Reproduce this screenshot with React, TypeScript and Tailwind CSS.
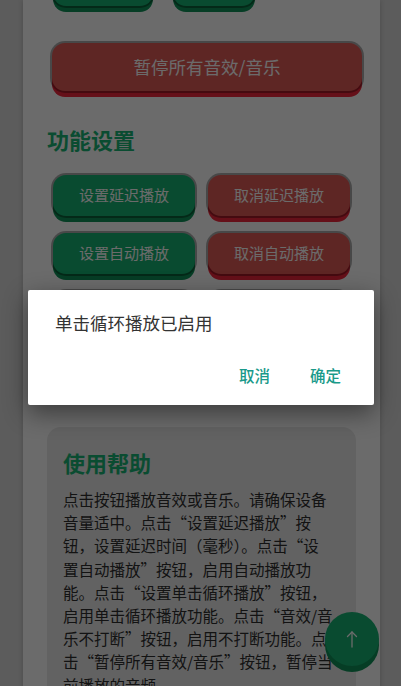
import React from "react";

const greenBtn =
  "flex items-center justify-center rounded-[13px] bg-[#17b273] text-white shadow-[0_0_0_2px_rgba(0,0,0,0.32),0_6px_0_#0f9258]";
const redBtn =
  "flex items-center justify-center rounded-[13px] bg-[#e05b57] text-white shadow-[0_0_0_2px_rgba(0,0,0,0.32),0_6px_0_#f0283c]";

const helpLines = [
  "点击按钮播放音效或音乐。请确保设备",
  "音量适中。点击“设置延迟播放”按",
  "钮，设置延迟时间（毫秒）。点击“设",
  "置自动播放”按钮，启用自动播放功",
  "能。点击“设置单击循环播放”按钮，",
  "启用单击循环播放功能。点击“音效/音",
  "乐不打断”按钮，启用不打断功能。点",
  "击“暂停所有音效/音乐”按钮，暂停当",
  "前播放的音频。",
];

export default function App() {
  return (
    <div className="relative h-[686px] w-[401px] overflow-hidden bg-[#dcdcdc] font-['Noto_Sans_CJK_SC','Noto_Sans',sans-serif]">
      <div className="ml-[23px] flex min-h-[760px] w-[357px] flex-col bg-white px-[24px] shadow-[0_0_6px_rgba(0,0,0,0.2)]">
        <div className="-mt-[36px] flex gap-[20px] pl-[6px]">
          <div className={`${greenBtn} h-[42px] w-[100px]`} />
          <div className={`${greenBtn} h-[42px] w-[82px]`} />
        </div>

        <div className={`${redBtn} ml-[5px] mt-[37px] h-[48px] w-[310px] text-[17.5px]`}>
          暂停所有音效/音乐
        </div>

        <h2 className="mt-[33px] text-[22px] font-bold leading-[30px] text-[#1ab576]">功能设置</h2>

        <div className="mt-[21px] grid grid-cols-2 gap-x-[13px] gap-y-[17px] px-[6px] text-[15px]">
          <div className={`${greenBtn} h-[41px]`}>设置延迟播放</div>
          <div className={`${redBtn} h-[41px]`}>取消延迟播放</div>
          <div className={`${greenBtn} h-[41px]`}>设置自动播放</div>
          <div className={`${redBtn} h-[41px]`}>取消自动播放</div>
          <div className={`${greenBtn} h-[41px]`} />
          <div className={`${redBtn} h-[41px]`} />
          <div className={`${greenBtn} h-[41px]`} />
          <div className={`${redBtn} h-[41px]`} />
        </div>

        <div className="mt-[37px] rounded-[14px] bg-[#e9e9e9] px-[16px] pb-[20px] pt-[20px]">
          <h2 className="text-[22px] font-bold leading-[30px] text-[#1ab576]">使用帮助</h2>
          <p className="mt-[11px] text-[15.5px] leading-[23.2px] text-[#2e2e2e]">
            {helpLines.map((l, i) => (
              <span key={i} className="block whitespace-nowrap">
                {l}
              </span>
            ))}
          </p>
        </div>
      </div>

      <div className="absolute bottom-[20px] right-[22px] flex h-[54px] w-[54px] items-center justify-center rounded-full bg-[#17b273] shadow-[0_6px_0_#0f9258]">
        <svg width="16" height="18" viewBox="0 0 16 18" fill="none" stroke="white" strokeWidth="1.3" strokeLinecap="round" strokeLinejoin="round">
          <path d="M8 2 L8 17" />
          <path d="M3.5 6.5 L8 2 L12.5 6.5" />
        </svg>
      </div>

      <div className="absolute inset-0 bg-black/[0.58]" />

      <div className="absolute left-[28px] top-[290px] h-[115px] w-[346px] rounded-[2px] bg-white shadow-[0_8px_24px_rgba(0,0,0,0.45)]">
        <p className="pl-[27px] pt-[21px] text-[17.5px] leading-[24px] text-[#333333]">单击循环播放已启用</p>
        <div className="mt-[29px] flex justify-end gap-[40px] pr-[33px] text-[15.5px] font-medium leading-[22px] text-[#1a9a8a]">
          <span>取消</span>
          <span>确定</span>
        </div>
      </div>
    </div>
  );
}
